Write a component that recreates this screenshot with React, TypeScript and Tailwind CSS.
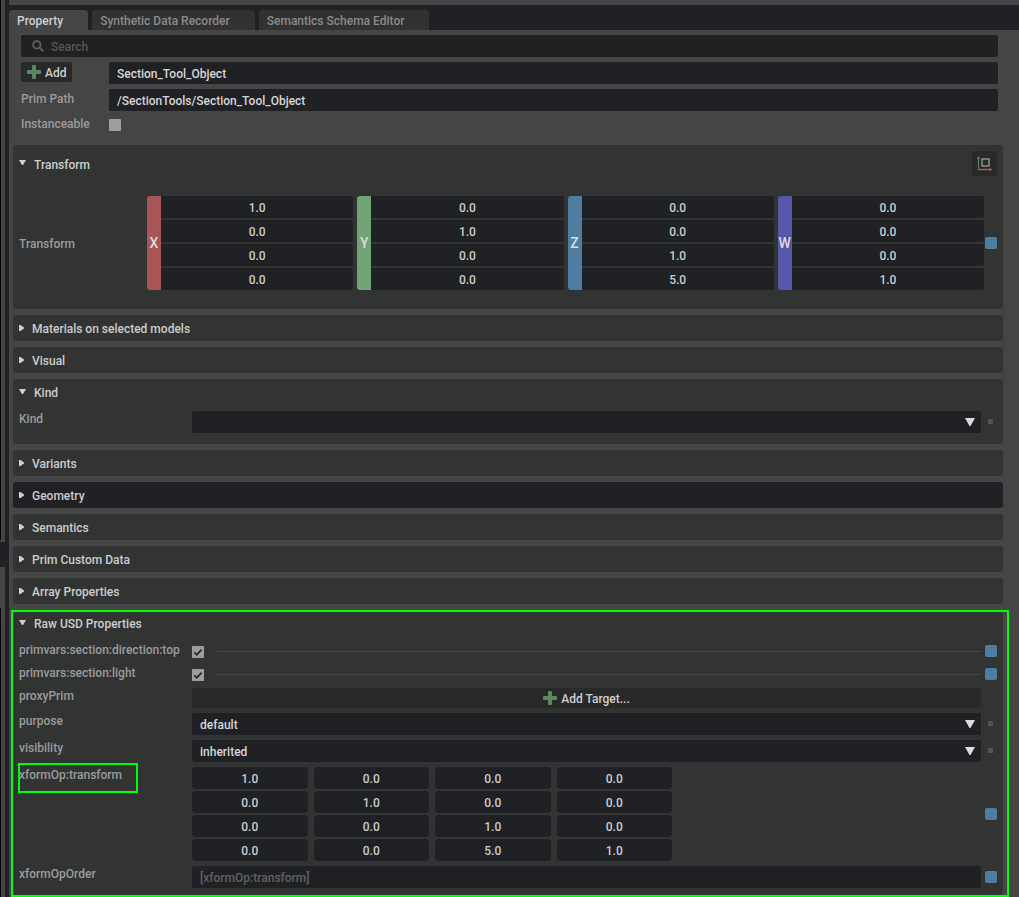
import { useState } from "react";
import type { ReactNode } from "react";

const tabs = ["Property", "Synthetic Data Recorder", "Semantics Schema Editor"];

const matrix = [
  ["1.0", "0.0", "0.0", "0.0"],
  ["0.0", "1.0", "0.0", "0.0"],
  ["0.0", "0.0", "1.0", "0.0"],
  ["0.0", "0.0", "5.0", "1.0"],
];

const axes = [
  { name: "X", color: "bg-[#aa5555]" },
  { name: "Y", color: "bg-[#71a376]" },
  { name: "Z", color: "bg-[#4f7da0]" },
  { name: "W", color: "bg-[#5656aa]" },
];

const PlusIcon = () => (
  <svg width="14" height="14" viewBox="0 0 14 14" className="shrink-0" aria-hidden="true">
    <path d="M5 1q0-1 1-1h2q1 0 1 1v4h4q1 0 1 1v2q0 1-1 1H9v4q0 1-1 1H6q-1 0-1-1V9H1Q0 9 0 8V6q0-1 1-1h4z" fill="#5b8762" />
  </svg>
);

const SearchIcon = () => (
  <svg width="12" height="12" viewBox="0 0 12 12" fill="none" stroke="#5c5c5c" aria-hidden="true">
    <circle cx="4.8" cy="4.8" r="3.8" strokeWidth="1.8" />
    <path d="M7.6 7.6l3.6 3.6" strokeWidth="2.2" />
  </svg>
);

const OffsetIcon = () => (
  <svg width="17" height="17" viewBox="0 0 17 17" fill="none" aria-hidden="true">
    <path d="M2.5 15V3" stroke="#4c8a5c" strokeWidth="1.2" />
    <path d="M2.5 1L4.2 4H.8z" fill="#4c8a5c" />
    <path d="M2 14.5h12" stroke="#b85c5c" strokeWidth="1.4" />
    <path d="M16.5 14.5L13.5 13v3z" fill="#b85c5c" />
    <rect x="6" y="4" width="7" height="7" stroke="#a8a39e" strokeWidth="1.2" />
  </svg>
);

const Arrow = ({ open }: { open: boolean }) => (
  <svg width="7" height="7" viewBox="0 0 7 7" fill="#d0d0d0" className="shrink-0" aria-hidden="true">
    {open ? <path d="M0 0h7L4 5H3z" /> : <path d="M0 0h1.5L5 2.5v1L1.5 6H0z" />}
  </svg>
);

const Marker = ({ changed = false }: { changed?: boolean }) => (
  <span className="flex w-3 shrink-0 items-center justify-center self-center">
    {changed ? (
      <span className="size-3 rounded-xs bg-[#4f7da0]" />
    ) : (
      <span className="mr-px mb-px size-[5px] bg-[#535353]" />
    )}
  </span>
);

type SectionProps = {
  title: string;
  defaultOpen?: boolean;
  dark?: boolean;
  headerClass?: string;
  action?: ReactNode;
  children?: ReactNode;
};

const Section = ({
  title,
  defaultOpen = false,
  dark = false,
  headerClass = "h-[26px]",
  action,
  children,
}: SectionProps) => {
  const [open, setOpen] = useState(defaultOpen);

  return (
    <section className={`rounded-[3px] px-1.5 ${dark ? "bg-[#202124]" : "bg-[#323433]"}`}>
      <div className={`flex items-center ${headerClass}`}>
        <button
          type="button"
          aria-expanded={open}
          onClick={() => setOpen(!open)}
          className={`flex flex-1 items-center text-left text-[#cccccc] ${open ? "gap-2" : "gap-1.5"}`}
        >
          <Arrow open={open} />
          <span className="pt-0.5">{title}</span>
        </button>
        {action}
      </div>
      {open && children}
    </section>
  );
};

type RowProps = {
  label: string;
  htmlFor?: string;
  changed?: boolean;
  marker?: boolean;
  highlight?: boolean;
  children: ReactNode;
};

const Row = ({ label, htmlFor, changed, marker = true, highlight, children }: RowProps) => (
  <div className="flex items-start">
    <label htmlFor={htmlFor} className="relative w-[173px] shrink-0 leading-4 text-[#9b9b9b]">
      {label}
      {highlight && (
        <span className="absolute -top-1 -left-px h-[30px] w-[120px] border-2 border-[#00ff00]" />
      )}
    </label>
    <div className="mr-1 min-w-0 flex-1">{children}</div>
    {marker ? <Marker changed={changed} /> : <span className="w-3 shrink-0" />}
  </div>
);

const Select = ({ id, options }: { id: string; options: string[] }) => (
  <div className="relative">
    <select
      id={id}
      className="block h-[22px] w-full appearance-none rounded-xs bg-[#202124] px-2 pt-0.5 text-[#d6d6d6] outline-none"
    >
      {options.map((option) => (
        <option key={option}>{option}</option>
      ))}
    </select>
    <svg
      width="10"
      height="8"
      viewBox="0 0 10 8"
      fill="#dcdcdc"
      className="pointer-events-none absolute top-[7px] right-1.5"
      aria-hidden="true"
    >
      <path d="M0 0h10L5.5 8h-1z" />
    </svg>
  </div>
);

const Checkbox = ({ id, defaultChecked }: { id: string; defaultChecked?: boolean }) => (
  <span className="grid size-3 shrink-0">
    <input
      id={id}
      type="checkbox"
      defaultChecked={defaultChecked}
      className="peer col-start-1 row-start-1 size-3 appearance-none rounded-[1px] bg-[#9e9e9e]"
    />
    <svg
      viewBox="0 0 12 12"
      fill="none"
      stroke="#2a2a2a"
      strokeWidth="1.8"
      className="pointer-events-none invisible col-start-1 row-start-1 size-3 peer-checked:visible"
      aria-hidden="true"
    >
      <path d="M2.2 6.3l2.6 2.4 4.8-5" />
    </svg>
  </span>
);

const CheckRow = ({ id, label }: { id: string; label: string }) => (
  <Row label={label} htmlFor={id} changed>
    <div className="flex h-[18px] items-center">
      <div className="pt-0.5">
        <Checkbox id={id} defaultChecked />
      </div>
      <span className="ml-[13px] h-px flex-1 bg-[#454745]" />
    </div>
  </Row>
);

const fieldClass = "block h-[22px] w-full min-w-0 bg-[#202124] pt-0.5 outline-none";

export default function App() {
  const [activeTab, setActiveTab] = useState(tabs[0]);

  return (
    <div className="flex min-h-screen bg-[#202124] font-[Roboto,'Liberation_Sans',sans-serif] text-xs font-medium">
      {/* Edge of the neighbouring docked panels */}
      <div className="mr-1 flex w-[5px] shrink-0 flex-col">
        <div className="h-[542px] border-b-4 border-l border-b-[#454545] border-l-black bg-[#454545]" />
        <div className="h-[25px]" />
        <div className="h-[41px] bg-[#454545]" />
        <div className="flex-1 border-l border-black bg-[#454545]" />
      </div>

      <div className="flex min-w-0 flex-1 flex-col">
        <div className="h-[5px] bg-[#454545]" />
        <div className="flex gap-1 pt-[5px]" role="tablist">
          {tabs.map((tab) => (
            <button
              key={tab}
              type="button"
              role="tab"
              aria-selected={activeTab === tab}
              onClick={() => setActiveTab(tab)}
              className={`h-5 rounded-t pt-0.5 pr-[25px] pl-2 text-left ${
                activeTab === tab ? "bg-[#454545] text-[#d0d0d0]" : "bg-[#323232] text-[#8a8a8a]"
              }`}
            >
              {tab}
            </button>
          ))}
        </div>

        <main className="flex-1 bg-[#454545] pr-4 pl-1">
          <div className="flex flex-col gap-[5px] pt-[5px] pr-[5px] pl-2">
            <label className="flex h-[22px] items-center gap-[7px] rounded-xs bg-[#202122] pl-[11px]">
              <SearchIcon />
              <input
                type="text"
                aria-label="Search"
                placeholder="Search"
                className="flex-1 bg-transparent pt-0.5 outline-none placeholder:text-[#565656]"
              />
            </label>
            <div className="flex items-start">
              <div className="w-[88px] shrink-0">
                <button
                  type="button"
                  className="flex h-5 items-center gap-1 rounded-xs bg-[#292929] px-1.5 text-[#d0d0d0]"
                >
                  <PlusIcon />
                  <span className="pt-0.5">Add</span>
                </button>
              </div>
              <input
                type="text"
                aria-label="Name"
                defaultValue="Section_Tool_Object"
                className={`${fieldClass} rounded-xs px-2 text-[#d6d6d6]`}
              />
            </div>
            <div className="flex items-start">
              <label htmlFor="prim-path" className="w-[88px] shrink-0 leading-5 text-[#9b9b9b]">
                Prim Path
              </label>
              <input
                id="prim-path"
                type="text"
                defaultValue="/SectionTools/Section_Tool_Object"
                className={`${fieldClass} rounded-xs px-2 text-[#d6d6d6]`}
              />
            </div>
            <div className="flex h-[18px] items-center">
              <label htmlFor="instanceable" className="w-[88px] shrink-0 pb-0.5 leading-4 text-[#9b9b9b]">
                Instanceable
              </label>
              <Checkbox id="instanceable" />
            </div>
          </div>

          <div className="mt-[11px] flex flex-col gap-1.5">
            <Section
              title="Transform"
              defaultOpen
              headerClass="pt-1.5"
              action={
                <button
                  type="button"
                  aria-label="Toggle offset mode"
                  className="flex size-[25px] items-center justify-center rounded-xs bg-[#292929]"
                >
                  <OffsetIcon />
                </button>
              }
            >
              <div className="flex items-center pt-5 pb-[19px]">
                <span className="w-32 shrink-0 pt-0.5 text-[#9b9b9b]">Transform</span>
                <div className="mr-px grid flex-1 grid-cols-4 gap-1">
                  {axes.map((axis, col) => (
                    <div key={axis.name} className="flex">
                      <div
                        className={`flex w-3.5 shrink-0 items-center justify-center rounded-l-[3px] text-sm text-[#dcdcdc] ${axis.color}`}
                      >
                        {axis.name}
                      </div>
                      <div className="flex min-w-0 flex-1 flex-col gap-0.5">
                        {matrix.map((row, i) => (
                          <input
                            key={i}
                            type="text"
                            aria-label={`${axis.name} ${i + 1}`}
                            defaultValue={row[col]}
                            className={`${fieldClass} rounded-r-xs text-center text-[#cccccc]`}
                          />
                        ))}
                      </div>
                    </div>
                  ))}
                </div>
                <Marker changed />
              </div>
            </Section>

            <Section title="Materials on selected models" />
            <Section title="Visual" />
            <Section title="Kind" defaultOpen>
              <div className="pt-1.5 pb-[11px]">
                <Row label="Kind" htmlFor="kind">
                  <Select id="kind" options={["", "assembly", "component", "group", "subcomponent"]} />
                </Row>
              </div>
            </Section>
            <Section title="Variants" />
            <Section title="Geometry" dark />
            <Section title="Semantics" />
            <Section title="Prim Custom Data" />
            <Section title="Array Properties" />

            <div className="-mr-1.5 -ml-0.5 border-2 border-[#00ff00] pr-1">
              <Section title="Raw USD Properties" defaultOpen headerClass="h-[22px]">
                <div className="flex flex-col gap-[5px] pt-2 pb-[7px]">
                  <CheckRow id="direction-top" label="primvars:section:direction:top" />
                  <CheckRow id="section-light" label="primvars:section:light" />
                  <Row label="proxyPrim" marker={false}>
                    <button
                      type="button"
                      className="flex h-5 w-full items-center justify-center gap-1 rounded-xs bg-[#292929] text-[#d0d0d0]"
                    >
                      <PlusIcon />
                      <span className="pt-0.5">Add Target...</span>
                    </button>
                  </Row>
                  <Row label="purpose" htmlFor="purpose">
                    <Select id="purpose" options={["default", "render", "proxy", "guide"]} />
                  </Row>
                  <Row label="visibility" htmlFor="visibility">
                    <Select id="visibility" options={["inherited", "invisible"]} />
                  </Row>
                  <Row label="xformOp:transform" changed highlight>
                    <div className="grid max-w-[480px] grid-cols-4 gap-x-1.5 gap-y-0.5">
                      {matrix.map((row, i) =>
                        row.map((value, j) => (
                          <input
                            key={`${i}-${j}`}
                            type="text"
                            aria-label={`xformOp:transform ${i + 1},${j + 1}`}
                            defaultValue={value}
                            className={`${fieldClass} rounded text-center text-[#cccccc]`}
                          />
                        ))
                      )}
                    </div>
                  </Row>
                  <Row label="xformOpOrder" htmlFor="xform-op-order" changed>
                    <input
                      id="xform-op-order"
                      type="text"
                      readOnly
                      value="[xformOp:transform]"
                      className={`${fieldClass} rounded-xs px-2 text-[#606060]`}
                    />
                  </Row>
                </div>
              </Section>
            </div>
          </div>
        </main>
      </div>
    </div>
  );
}
